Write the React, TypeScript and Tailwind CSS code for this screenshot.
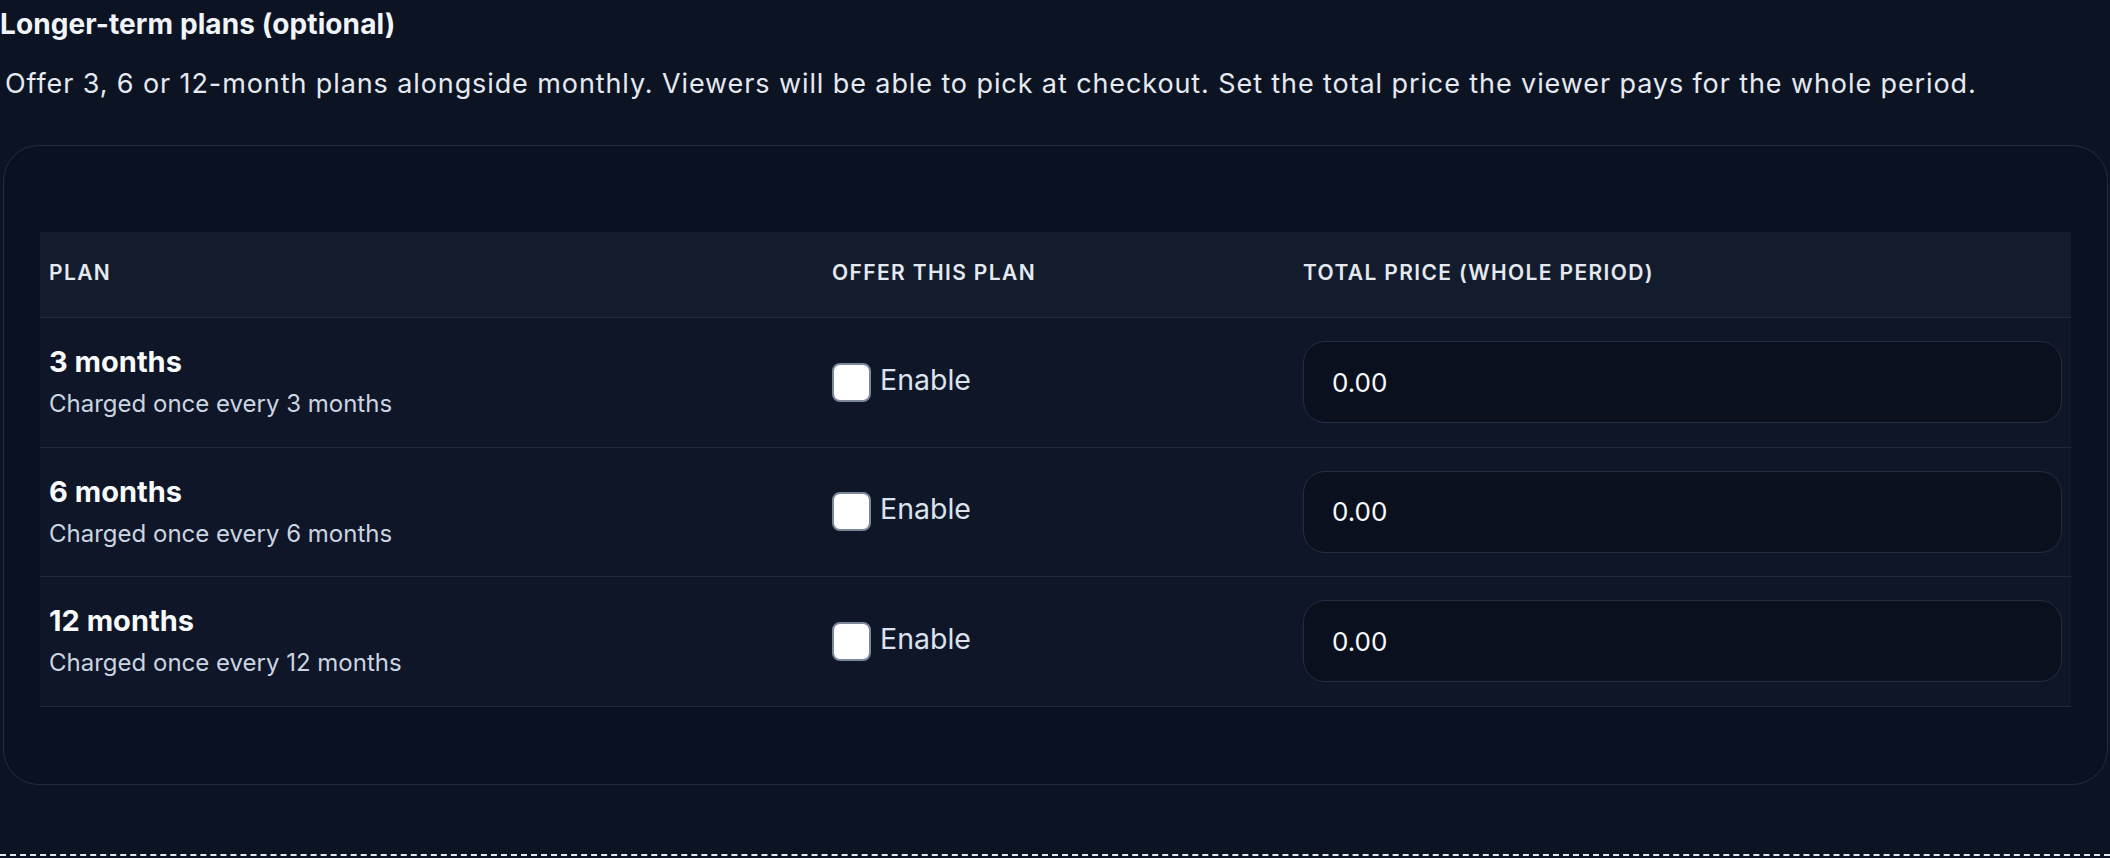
import React from 'react';

// 長期プラン設定テーブル
const plans = [
  { id: '3m', label: '3 months', note: 'Charged once every 3 months' },
  { id: '6m', label: '6 months', note: 'Charged once every 6 months' },
  { id: '12m', label: '12 months', note: 'Charged once every 12 months' },
];

const PlanRow: React.FC<{ label: string; note: string }> = ({ label, note }) => (
  <div className="grid h-[129.6px] grid-cols-[783px_471px_1fr] items-center border-b border-[#1f2a3c] bg-[#0e1627]">
    <div className="px-[9px]">
      <div className="text-[29px] font-bold leading-[39px] text-[#f8fafc]">{label}</div>
      <div className="mt-[5px] text-[24px] leading-[36px] text-[#cbd5e1]">{note}</div>
    </div>
    <div className="px-[9px]">
      <label className="flex items-center gap-[9px]">
        <input
          type="checkbox"
          className="h-[39px] w-[39px] appearance-none rounded-[8px] border-2 border-[#7b889c] bg-white"
        />
        <span className="mb-[5px] text-[28.5px] leading-[36px] text-[#dbe3ee]">Enable</span>
      </label>
    </div>
    <div className="px-[9px]">
      <input
        type="text"
        readOnly
        value="0.00"
        className="h-[82px] w-full rounded-[22px] border border-[#222e41] bg-[#0a101e] pl-[28px] text-[26px] text-[#f8fafc] outline-none"
      />
    </div>
  </div>
);

export default function App() {
  return (
    <div className="min-h-screen bg-[#0c1424] font-['Inter','Noto_Sans',sans-serif]">
      <h2 className="pt-[6px] text-[28px] font-bold leading-[36px] tracking-[0.1px] text-[#f1f5f9]">
        Longer-term plans (optional)
      </h2>
      <p className="mt-[24px] pl-[5px] text-[27px] leading-[36px] tracking-[0.9px] text-[#e5e9f0]">
        Offer 3, 6 or 12-month plans alongside monthly. Viewers will be able to pick at checkout. Set the total price the viewer pays for the whole period.
      </p>

      <div className="mt-[43px] ml-[3px] mr-[2px] rounded-[36px] border border-[#222d3f] bg-[#0a1120] px-[36px] pt-[86px] pb-[77px]">
        {/* ヘッダー */}
        <div className="grid h-[86px] grid-cols-[783px_471px_1fr] items-center border-b border-[#1f2a3c] bg-[#131c2c] pb-[4px] text-[21px] font-semibold tracking-[0.065em] text-[#e5e9f0]">
          <div className="px-[9px]">PLAN</div>
          <div className="px-[9px]">OFFER THIS PLAN</div>
          <div className="px-[9px]">TOTAL PRICE (WHOLE PERIOD)</div>
        </div>
        {plans.map((p) => (
          <PlanRow key={p.id} label={p.label} note={p.note} />
        ))}
      </div>

      <div className="mt-[69px] border-t-2 border-dashed border-[#e2e8f0]" />
    </div>
  );
}
